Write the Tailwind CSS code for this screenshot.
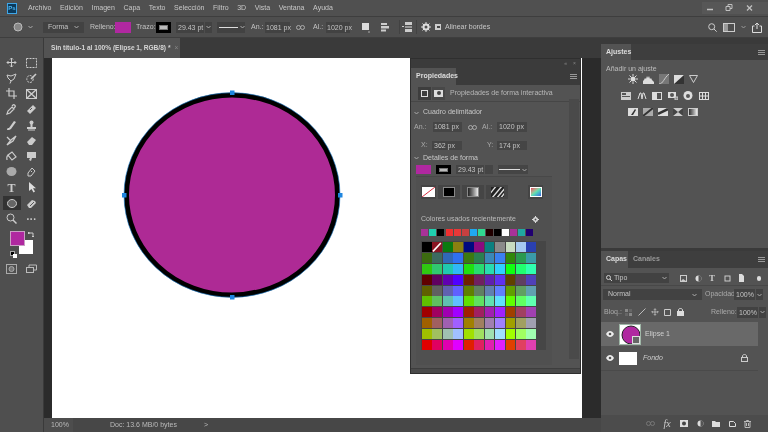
<!DOCTYPE html>
<html><head><meta charset="utf-8"><script src="https://cdn.jsdelivr.net/npm/@tailwindcss/browser@4"></script><title>Photoshop</title></head>
<body class="m-0 bg-[#3a3a3a]">
<div class="w-[768px] h-[432px] overflow-hidden flex flex-col font-['Liberation_Sans',sans-serif] text-[7px] text-[#c4c4c4] bg-[#4f4f4f] blur-[0.4px]">

<!-- menu -->
<div class="h-[16px] shrink-0 flex items-center bg-[#505050] relative">
  <div class="ml-[7px] w-[10px] h-[11px] bg-[#0b3a5c] border border-[#3fa6e8] text-[#4db5f0] text-[6px] leading-[9px] text-center font-bold">Ps</div>
  <div class="ml-[11px] flex gap-[8.6px] text-[7px] text-[#c8c8c8]"><span>Archivo</span><span>Edición</span><span>Imagen</span><span>Capa</span><span>Texto</span><span>Selección</span><span>Filtro</span><span>3D</span><span>Vista</span><span>Ventana</span><span>Ayuda</span></div>
  <div class="ml-auto flex items-center h-[12px] bg-[#575757] text-[#bdbdbd]">
    <svg class="w-[66px] h-[12px]" viewBox="0 0 66 12" fill="none" stroke="#c0c0c0"><path d="M5 7.5h6" stroke-width="1.5"/><path d="M24 4.5h4v4h-4zM26 4.5v-2h4v4h-2" /><path d="M45 3.5l5 5M50 3.5l-5 5" stroke-width="1.3"/></svg>
  </div>
</div>

<!-- options -->
<div class="h-[22px] shrink-0 flex items-center bg-[#4e4e4e] border-t border-b border-[#3e3e3e] relative">
  <svg class="ml-[13px] w-[10px] h-[10px]" viewBox="0 0 10 10"><circle cx="5" cy="5" r="4" fill="#888" stroke="#bbb"/></svg>
  <svg class="ml-[5px] w-[5px] h-[4px]" viewBox="0 0 5 4" fill="none" stroke="#aaa"><path d="M0.5 1l2 2 2-2"/></svg>
  <div class="ml-[10px] w-[41px] h-[11px] bg-[#424242] flex items-center justify-between px-[5px]"><span>Forma</span><svg class="w-[5px] h-[4px]" viewBox="0 0 5 4" fill="none" stroke="#aaa"><path d="M0.5 1l2 2 2-2"/></svg></div>
  <span class="ml-[6px] w-[25px]">Relleno:</span>
  <div class="w-[16px] h-[11px] bg-[#b028a0]"></div>
  <span class="ml-[5px] w-[20px]">Trazo:</span>
  <div class="w-[15px] h-[11px] bg-black flex items-center justify-center"><div class="w-[9px] h-[5px] bg-[#bbb] border border-[#777]"></div></div>
  <div class="ml-[5px] w-[28px] h-[11px] bg-[#424242] pl-[2px] leading-[11px] whitespace-nowrap">29.43 pt</div>
  <div class="ml-px w-[7px] h-[11px] bg-[#424242] flex items-center justify-center"><svg class="w-[5px] h-[4px]" viewBox="0 0 5 4" fill="none" stroke="#aaa"><path d="M0.5 1l2 2 2-2"/></svg></div>
  <div class="ml-[5px] w-[28px] h-[11px] bg-[#424242] flex items-center gap-[2px] pl-[2px]"><div class="w-[19px] h-px bg-[#ddd]"></div><svg class="w-[5px] h-[4px]" viewBox="0 0 5 4" fill="none" stroke="#aaa"><path d="M0.5 1l2 2 2-2"/></svg></div>
  <span class="ml-[6px] w-[14px]">An.:</span>
  <div class="w-[25px] h-[11px] bg-[#424242] pl-px leading-[11px] whitespace-nowrap">1081 px</div>
  <svg class="ml-[6px] w-[9px] h-[5px]" viewBox="0 0 9 5" fill="none" stroke="#aaa"><rect x=".5" y=".5" width="4" height="4" rx="2"/><rect x="4.5" y=".5" width="4" height="4" rx="2"/></svg>
  <span class="ml-[8px] w-[13px]">Al.:</span>
  <div class="w-[24px] h-[11px] bg-[#424242] pl-px leading-[11px] whitespace-nowrap">1020 px</div>
  <svg class="ml-[11px] w-[10px] h-[11px]" viewBox="0 0 10 11"><rect x="1" y="1" width="7" height="7" fill="#ddd"/><path d="M7 10h2" stroke="#aaa"/></svg>
  <svg class="ml-[9px] w-[10px] h-[11px]" viewBox="0 0 10 11" fill="#ccc"><rect x="1" y="1" width="6" height="2"/><rect x="1" y="4" width="8" height="2.5"/><rect x="1" y="7.5" width="5" height="2"/></svg>
  <div class="ml-[9px] w-px h-[14px] bg-[#424242]"></div>
  <svg class="ml-[2px] w-[11px] h-[12px]" viewBox="0 0 11 12" fill="#ccc"><rect x="3" y="1" width="7" height="3"/><rect x="3" y="5" width="7" height="2" fill="#999"/><rect x="3" y="8" width="7" height="3"/><path d="M0 5h2v1H0z"/></svg>
  <div class="ml-[3px] w-px h-[14px] bg-[#424242]"></div>
  <svg class="ml-[4px] w-[10px] h-[10px]" viewBox="0 0 10 10"><circle cx="5" cy="5" r="2.5" fill="none" stroke="#ddd" stroke-width="2"/><path d="M5 0v2M5 8v2M0 5h2M8 5h2M1.5 1.5l1.5 1.5M7 7l1.5 1.5M1.5 8.5L3 7M7 3l1.5-1.5" stroke="#ddd"/></svg>
  <div class="ml-[4px] w-[6px] h-[6px] bg-[#ccc] flex items-center justify-center"><div class="w-[3px] h-[2px] bg-[#444]"></div></div>
  <span class="ml-[4px] text-[#c8c8c8]">Alinear bordes</span>
  <div class="ml-auto mr-[6px] flex items-center gap-[6px]">
    <svg class="w-[9px] h-[9px]" viewBox="0 0 9 9" fill="none" stroke="#ccc"><circle cx="3.7" cy="3.7" r="3"/><path d="M6 6l2.7 2.7"/></svg>
    <svg class="w-[12px] h-[9px]" viewBox="0 0 12 9"><rect x=".5" y=".5" width="11" height="8" fill="none" stroke="#ccc"/><rect x="1" y="1" width="4" height="7" fill="#999"/></svg>
    <svg class="w-[5px] h-[4px]" viewBox="0 0 5 4" fill="none" stroke="#999"><path d="M0.5 1l2 2 2-2"/></svg>
    <svg class="w-[10px] h-[11px]" viewBox="0 0 10 11" fill="none" stroke="#ddd"><path d="M2.5 4H.5v6.5h9V4h-2M5 7V1M3 3l2-2 2 2"/></svg>
  </div>
</div>

<!-- main -->
<div class="flex-1 flex min-h-0">
  <!-- tools -->
  <div class="w-[44px] shrink-0 bg-[#4f4f4f] border-r border-[#3a3a3a] pt-[17px] flex flex-col items-center">
    <div class="grid grid-cols-[20px_20px] auto-rows-[15.6px] place-items-center">
      <svg class="w-[11px] h-[11px]" viewBox="0 0 11 11" fill="none" stroke="#ccc"><path d="M5.5 1v9M1 5.5h9M4 2.5L5.5 1 7 2.5M4 8.5L5.5 10 7 8.5M2.5 4L1 5.5 2.5 7M8.5 4L10 5.5 8.5 7"/></svg>
      <svg class="w-[11px] h-[10px]" viewBox="0 0 11 10" fill="none" stroke="#ccc" stroke-dasharray="2 1"><rect x=".5" y=".5" width="10" height="9"/></svg>
      <svg class="w-[11px] h-[11px]" viewBox="0 0 11 11" fill="none" stroke="#ccc"><path d="M1 2l4 1 5-2-2 5-3 2-3-3zM5 8l-1 2.5"/></svg>
      <svg class="w-[11px] h-[11px]" viewBox="0 0 11 11" fill="none" stroke="#ccc"><ellipse cx="4" cy="6" rx="3.2" ry="3.5" stroke-dasharray="2 1"/><path d="M5 6l5-5" stroke-width="1.6"/></svg>
      <svg class="w-[11px] h-[11px]" viewBox="0 0 11 11" fill="none" stroke="#ccc" stroke-width="1.2"><path d="M3 0v8h8M0 3h8v8"/></svg>
      <svg class="w-[11px] h-[10px]" viewBox="0 0 11 10" fill="none" stroke="#ccc"><rect x=".5" y=".5" width="10" height="9"/><path d="M.5.5l10 9M10.5.5l-10 9" stroke-width="1.4"/></svg>
      <svg class="w-[11px] h-[11px]" viewBox="0 0 11 11" fill="none" stroke="#ccc"><path d="M1 10l1-3 4-4 2 2-4 4zM6 2l1-1c1-1 3 1 2 2l-1 1" stroke-width="1.2"/></svg>
      <svg class="w-[11px] h-[11px]" viewBox="0 0 11 11" fill="#ccc"><path d="M1 7l6-6 3 3-6 6z"/><path d="M4 6l2-2" stroke="#555"/></svg>
      <svg class="w-[11px] h-[11px]" viewBox="0 0 11 11" fill="#ccc"><path d="M1 10c0-2 1-2 2-2l5-7 2 1-5 7c-1 1-3 1-4 1z"/></svg>
      <svg class="w-[11px] h-[11px]" viewBox="0 0 11 11" fill="#ccc"><circle cx="5.5" cy="2.5" r="2"/><path d="M4.5 4h2v3h-2z"/><rect x="1" y="7" width="9" height="2"/><rect x="2" y="9.5" width="7" height="1"/></svg>
      <svg class="w-[11px] h-[11px]" viewBox="0 0 11 11" fill="none" stroke="#ccc"><path d="M1 10l4-5 5-4-3 5zM1 2l3 3" stroke-width="1.3"/></svg>
      <svg class="w-[11px] h-[11px]" viewBox="0 0 11 11" fill="#ccc"><path d="M1 7l5-5 4 3-4 5H3z"/></svg>
      <svg class="w-[11px] h-[11px]" viewBox="0 0 11 11" fill="none" stroke="#ccc"><path d="M2 4l4-3 4 5-4 3zM2 4c-2 2-1 3-1 5" stroke-width="1.2"/></svg>
      <svg class="w-[11px] h-[11px]" viewBox="0 0 11 11" fill="#ccc"><path d="M1 1h9v6H6l-1 3-2-1 1-2H1z"/></svg>
      <svg class="w-[11px] h-[11px]" viewBox="0 0 11 11" fill="#aaa"><ellipse cx="5.5" cy="5.5" rx="5" ry="4.5"/></svg>
      <svg class="w-[11px] h-[11px]" viewBox="0 0 11 11" fill="none" stroke="#ccc"><path d="M2 7l4-5 3 3-4 5H2zM6 6l-1-1"/></svg>
      <span class="text-[12px] leading-none font-['Liberation_Serif'] font-bold text-[#ccc]">T</span>
      <svg class="w-[10px] h-[11px]" viewBox="0 0 10 11" fill="#ddd"><path d="M2 0v9l2.5-2 2 3.5 1.5-1-2-3.3H9z"/></svg>
      <div class="w-[18px] h-[14px] bg-[#333] flex items-center justify-center"><svg class="w-[10px] h-[9px]" viewBox="0 0 10 9"><ellipse cx="5" cy="4.5" rx="4.5" ry="4" fill="#666" stroke="#ccc"/></svg></div>
      <svg class="w-[11px] h-[11px]" viewBox="0 0 11 11" fill="#ccc"><path d="M1 7l5-5 3 1 1 2-5 5H3z"/><path d="M4 8l4-4" stroke="#555"/></svg>
      <svg class="w-[11px] h-[11px]" viewBox="0 0 11 11" fill="none" stroke="#ccc"><circle cx="4.5" cy="4.5" r="3.5"/><path d="M7 7l3.5 3.5" stroke-width="1.5"/></svg>
      <span class="text-[#ccc] text-[10px] leading-none font-bold tracking-[0.5px] -mt-[4px]">...</span>
    </div>
    <div class="relative w-[24px] h-[24px] mt-[4px] ml-[1px]">
      <div class="absolute left-[9px] top-[9px] w-[14px] h-[14px] bg-white"></div>
      <div class="absolute left-0 top-0 w-[15px] h-[15px] bg-[#b028a0] border border-[#c9a0c4]"></div>
      <svg class="absolute left-[18px] top-0 w-[7px] h-[7px]" viewBox="0 0 7 7" fill="none" stroke="#ccc"><path d="M1 2h4v4M0 2l1-1v2zM4 5l1 1 1-1"/></svg>
    </div>
    <div class="self-start ml-[10px] -mt-[4px] relative w-[7px] h-[7px]"><div class="absolute left-0 top-0 w-[5px] h-[5px] bg-black border border-[#aaa]"></div><div class="absolute left-[3px] top-[3px] w-[4px] h-[4px] bg-white"></div></div>
    <div class="mt-[6px] flex gap-[9px]">
      <svg class="w-[11px] h-[10px]" viewBox="0 0 11 10" fill="none" stroke="#aaa"><rect x=".5" y=".5" width="10" height="9"/><circle cx="5.5" cy="5" r="2.5" fill="#777"/></svg>
      <svg class="w-[11px] h-[10px]" viewBox="0 0 11 10" fill="none" stroke="#bbb"><rect x=".5" y="3.5" width="7" height="5"/><path d="M3 3V1h7.5v5H8"/></svg>
    </div>
  </div>

  <!-- centre -->
  <div class="w-[557px] shrink-0 flex flex-col relative bg-[#2b2b2b]">
    <div class="h-[20px] shrink-0 bg-[#3a3a3a] flex">
      <div class="w-[136px] bg-[#535353] flex items-center pl-[7px] gap-[4px] font-bold text-[6.6px] text-[#d6d6d6]"><span class="whitespace-nowrap">Sin título-1 al 100% (Elipse 1, RGB/8) *</span><span class="text-[#888] font-normal">×</span></div>
    </div>
    <div class="flex-1 min-h-0 pl-[8px] relative">
      <div class="w-[530px] h-[360px] bg-white relative">
        <svg class="absolute left-0 top-0 w-[530px] h-[360px]" viewBox="0 0 530 360">
          <ellipse cx="180" cy="137" rx="105.5" ry="100" fill="#ae2a95" stroke="#000" stroke-width="5"/>
          <ellipse cx="180" cy="137" rx="108" ry="102.3" fill="none" stroke="#1d7fd0" stroke-width=".6"/>
          <g fill="#1f86e0"><rect x="178" y="32.5" width="4.5" height="4.5"/><rect x="178" y="237" width="4.5" height="4.5"/><rect x="70" y="135" width="4.5" height="4.5"/><rect x="286" y="135" width="4.5" height="4.5"/></g>
        </svg>
      </div>
      <div class="absolute left-0 right-0 bottom-0 h-[14px] bg-[#474747] flex items-center text-[#bbb]">
        <div class="w-[29px] h-full bg-[#4d4d4d] pl-[7px] leading-[14px]">100%</div>
        <span class="ml-[37px]">Doc: 13.6 MB/0 bytes</span>
        <span class="ml-[27px]">&gt;</span>
      </div>
    </div>

    <!-- properties floating panel -->
    <div class="absolute left-[366px] top-[20px] w-[171px] h-[316px] bg-[#535353] border border-[#2f2f2f] flex flex-col">
      <div class="h-[9px] shrink-0 bg-[#3b3b3b] flex justify-end items-center gap-[6px] pr-[4px] text-[#888] text-[5px]"><span>«</span><span>×</span></div>
      <div class="h-[17px] shrink-0 bg-[#3b3b3b] flex justify-between items-center">
        <div class="w-[45px] h-full bg-[#535353] flex items-center pl-[5px] font-bold text-[#ddd]">Propiedades</div>
        <svg class="mr-[3px] w-[7px] h-[5px]" viewBox="0 0 7 5" fill="#999"><rect width="7" height="1"/><rect y="2" width="7" height="1"/><rect y="4" width="7" height="1"/></svg>
      </div>
      <div class="h-[17px] shrink-0 flex items-center pl-[7px] border-b border-[#464646] mb-[5px]">
        <div class="w-[13px] h-[13px] bg-[#3d3d3d] flex items-center justify-center"><div class="w-[7px] h-[7px] border border-[#ddd]"></div></div>
        <div class="ml-px w-[13px] h-[13px] bg-[#484848] flex items-center justify-center"><div class="w-[9px] h-[7px] bg-[#ddd] flex items-center justify-center"><div class="w-[4px] h-[4px] rounded-full bg-[#444]"></div></div></div>
        <span class="ml-[5px] text-[#b8b8b8]">Propiedades de forma interactiva</span>
      </div>
      <div class="flex items-center pl-[3px] h-[11px] text-[#c8c8c8]"><svg class="w-[5px] h-[4px]" viewBox="0 0 5 4" fill="none" stroke="#aaa"><path d="M0.5 1l2 2 2-2"/></svg><span class="ml-[4px]">Cuadro delimitador</span></div>
      <div class="flex items-center mt-[4px] h-[10px]">
        <span class="ml-[3px] w-[19px] text-[#aaa]">An.:</span><div class="w-[29px] h-[10px] bg-[#454545] pl-[1px] leading-[10px]">1081 px</div>
        <svg class="ml-[6px] w-[9px] h-[5px]" viewBox="0 0 9 5" fill="none" stroke="#aaa"><rect x=".5" y=".5" width="4" height="4" rx="2"/><rect x="4.5" y=".5" width="4" height="4" rx="2"/></svg>
        <span class="ml-[5px] w-[15px] text-[#aaa]">Al.:</span><div class="w-[30px] h-[10px] bg-[#454545] pl-[2px] leading-[10px]">1020 px</div>
      </div>
      <div class="flex items-center mt-[9px] h-[9px]">
        <span class="ml-[10px] w-[11px] text-[#aaa]">X:</span><div class="w-[30px] h-[9px] bg-[#454545] pl-[2px] leading-[9px]">362 px</div>
        <span class="ml-[25px] w-[10px] text-[#aaa]">Y:</span><div class="w-[30px] h-[9px] bg-[#454545] pl-[2px] leading-[9px]">174 px</div>
      </div>
      <div class="flex items-center pl-[3px] h-[10px] mt-[3px] text-[#c8c8c8]"><svg class="w-[5px] h-[4px]" viewBox="0 0 5 4" fill="none" stroke="#aaa"><path d="M0.5 1l2 2 2-2"/></svg><span class="ml-[4px]">Detalles de forma</span></div>
      <div class="flex items-center mt-[2px] h-[9px] pl-[5px]">
        <div class="w-[15px] h-[9px] bg-[#b028a0]"></div>
        <div class="ml-[5px] w-[15px] h-[9px] bg-black flex items-center justify-center"><div class="w-[9px] h-[4px] bg-[#bbb] border border-[#777]"></div></div>
        <div class="ml-[5px] w-[28px] h-[9px] bg-[#454545] pl-[2px] leading-[9px] whitespace-nowrap">29.43 pt</div>
        <div class="ml-px w-[8px] h-[9px] bg-[#454545]"></div>
        <div class="ml-[5px] w-[30px] h-[9px] bg-[#454545] flex items-center pl-[1px] gap-[2px]"><div class="w-[21px] h-px bg-[#ddd]"></div><svg class="w-[5px] h-[4px]" viewBox="0 0 5 4" fill="none" stroke="#aaa"><path d="M0.5 1l2 2 2-2"/></svg></div>
      </div>
      <div class="ml-[5px] w-[136px] flex-1 mt-[2px] mb-[8px] bg-[#505050] border-t border-[#484848] relative">
        <div class="flex items-center h-[15px] mt-[7px] pl-[5px]">
          <div class="w-[15px] h-[14px] bg-[#454545] flex items-center justify-center"><svg class="w-[13px] h-[10px]" viewBox="0 0 13 10"><rect width="13" height="10" fill="#fff"/><path d="M0 10L13 0" stroke="#d83040"/></svg></div>
          <div class="ml-[2px] w-[22px] h-[14px] bg-[#454545] flex items-center justify-center"><div class="w-[12px] h-[10px] bg-black border border-[#888]"></div></div>
          <div class="ml-[2px] w-[22px] h-[14px] bg-[#454545] flex items-center justify-center"><div class="w-[12px] h-[10px] border border-[#888] bg-gradient-to-r from-[#222] to-[#eee]"></div></div>
          <div class="ml-[2px] w-[22px] h-[14px] bg-[#454545] flex items-center justify-center"><svg class="w-[13px] h-[10px]" viewBox="0 0 13 10"><rect width="13" height="10" fill="#222"/><path d="M-2 8L6-2M1 11L11-1M5 12L15 0M9 12L16 3" stroke="#ddd" stroke-width="1.4"/></svg></div>
          <div class="ml-[20px] w-[15px] h-[14px] bg-[#454545] flex items-center justify-center"><div class="w-[12px] h-[10px] border border-white bg-gradient-to-br from-[#e04060] via-[#60e0b0] to-[#4060e0]"></div></div>
        </div>
        <div class="flex items-center mt-[15px] pl-[5px] h-[11px] text-[#bdbdbd]"><span class="w-[111px] shrink-0">Colores usados recientemente</span><svg class="w-[7px] h-[7px]" viewBox="0 0 10 10"><circle cx="5" cy="5" r="2.5" fill="none" stroke="#ddd" stroke-width="2.2"/><path d="M5 0v2M5 8v2M0 5h2M8 5h2" stroke="#ddd" stroke-width="1.4"/></svg></div>
        <div class="flex ml-[5px] mt-[4px] gap-[1px]">
          <div class="w-[7px] h-[7px] bg-[#a83298]"></div><div class="w-[7px] h-[7px] bg-[#20d0b0]"></div><div class="w-[7px] h-[7px] bg-[#000000]"></div><div class="w-[7px] h-[7px] bg-[#f03030] ml-[1px]"></div><div class="w-[7px] h-[7px] bg-[#e83838]"></div><div class="w-[7px] h-[7px] bg-[#c84040]"></div><div class="w-[7px] h-[7px] bg-[#20a8f0]"></div><div class="w-[7px] h-[7px] bg-[#30d890]"></div><div class="w-[7px] h-[7px] bg-[#200000]"></div><div class="w-[7px] h-[7px] bg-[#000000]"></div><div class="w-[7px] h-[7px] bg-[#ffffff]"></div><div class="w-[7px] h-[7px] bg-[#a83298]"></div><div class="w-[7px] h-[7px] bg-[#20a8a0]"></div><div class="w-[7px] h-[7px] bg-[#200070]"></div>
        </div>
        <div class="ml-[5px] mt-[5px] w-[125px] h-[109px] overflow-hidden bg-[#464646] pl-px pt-px grid grid-cols-[repeat(11,9.8px)] auto-rows-[10px] gap-[0.65px] gap-y-[0.9px]">
          <div class="bg-[#000000]"></div><div class="bg-[#8a1522] relative overflow-hidden"><svg class="absolute inset-0 w-full h-full" viewBox="0 0 10 10"><path d="M1 9.5L9 1" stroke="#fff" stroke-width="1.6"/></svg></div><div class="bg-[#0a7a10]"></div><div class="bg-[#8a8010]"></div><div class="bg-[#000a80]"></div><div class="bg-[#8a0a80]"></div><div class="bg-[#0a8080]"></div><div class="bg-[#8a8a8a]"></div><div class="bg-[#c8dcc0]"></div><div class="bg-[#a6caf0]"></div><div class="bg-[#2a40b0]"></div>
          <div class="bg-[#3c6a10]"></div><div class="bg-[#3c6a60]"></div><div class="bg-[#3068b8]"></div><div class="bg-[#3070f0]"></div><div class="bg-[#3c7a10]"></div><div class="bg-[#2a8050]"></div><div class="bg-[#3a88b8]"></div><div class="bg-[#3a80f0]"></div><div class="bg-[#30880a]"></div><div class="bg-[#2a9a50]"></div><div class="bg-[#3a9aa8]"></div>
          <div class="bg-[#30c810]"></div><div class="bg-[#30c870]"></div><div class="bg-[#20c8b0]"></div><div class="bg-[#30b8f8]"></div><div class="bg-[#20e010]"></div><div class="bg-[#28dc70]"></div><div class="bg-[#28dcb0]"></div><div class="bg-[#30d0ff]"></div><div class="bg-[#10ff10]"></div><div class="bg-[#20ff70]"></div><div class="bg-[#30ffb0]"></div>
          <div class="bg-[#600000]"></div><div class="bg-[#600060]"></div><div class="bg-[#6000b0]"></div><div class="bg-[#5000ff]"></div><div class="bg-[#702000]"></div><div class="bg-[#702060]"></div><div class="bg-[#6020b0]"></div><div class="bg-[#6030f0]"></div><div class="bg-[#604000]"></div><div class="bg-[#604060]"></div><div class="bg-[#5040b8]"></div>
          <div class="bg-[#606000]"></div><div class="bg-[#606060]"></div><div class="bg-[#6060b0]"></div><div class="bg-[#6060ff]"></div><div class="bg-[#608000]"></div><div class="bg-[#608060]"></div><div class="bg-[#6080b0]"></div><div class="bg-[#6080ff]"></div><div class="bg-[#60a000]"></div><div class="bg-[#60a060]"></div><div class="bg-[#60a0b0]"></div>
          <div class="bg-[#60c000]"></div><div class="bg-[#60c060]"></div><div class="bg-[#60c0b0]"></div><div class="bg-[#60c0ff]"></div><div class="bg-[#60e000]"></div><div class="bg-[#60e060]"></div><div class="bg-[#60e0b0]"></div><div class="bg-[#60e0ff]"></div><div class="bg-[#60ff00]"></div><div class="bg-[#60ff60]"></div><div class="bg-[#60ffb0]"></div>
          <div class="bg-[#a00000]"></div><div class="bg-[#a00060]"></div><div class="bg-[#a000b0]"></div><div class="bg-[#a000ff]"></div><div class="bg-[#a02000]"></div><div class="bg-[#a02060]"></div><div class="bg-[#a020b0]"></div><div class="bg-[#a020ff]"></div><div class="bg-[#a04000]"></div><div class="bg-[#a04060]"></div><div class="bg-[#a040b0]"></div>
          <div class="bg-[#a06000]"></div><div class="bg-[#a06060]"></div><div class="bg-[#a060b0]"></div><div class="bg-[#a060ff]"></div><div class="bg-[#a08000]"></div><div class="bg-[#a08060]"></div><div class="bg-[#a080b0]"></div><div class="bg-[#a080ff]"></div><div class="bg-[#a0a000]"></div><div class="bg-[#a0a060]"></div><div class="bg-[#a0a0b0]"></div>
          <div class="bg-[#a0c000]"></div><div class="bg-[#a0c060]"></div><div class="bg-[#a0c0b0]"></div><div class="bg-[#a0c0ff]"></div><div class="bg-[#a0e000]"></div><div class="bg-[#a0e060]"></div><div class="bg-[#a0e0b0]"></div><div class="bg-[#a0e0ff]"></div><div class="bg-[#a0ff00]"></div><div class="bg-[#a0ff60]"></div><div class="bg-[#a0ffb0]"></div>
          <div class="bg-[#e00000]"></div><div class="bg-[#e00060]"></div><div class="bg-[#e000b0]"></div><div class="bg-[#e000ff]"></div><div class="bg-[#e02000]"></div><div class="bg-[#e02060]"></div><div class="bg-[#e020b0]"></div><div class="bg-[#e020ff]"></div><div class="bg-[#e04000]"></div><div class="bg-[#e04060]"></div><div class="bg-[#e040b0]"></div>
          <div class="bg-[#e06000]"></div><div class="bg-[#e06060]"></div><div class="bg-[#e060b0]"></div><div class="bg-[#e060ff]"></div><div class="bg-[#e08000]"></div><div class="bg-[#e08060]"></div><div class="bg-[#e080b0]"></div><div class="bg-[#e080ff]"></div><div class="bg-[#e0a000]"></div><div class="bg-[#e0a060]"></div><div class="bg-[#e0a0b0]"></div>
        </div>
      </div>
      <div class="absolute right-px top-[40px] bottom-[14px] w-[10px] bg-[#4a4a4a]"></div>
      <div class="absolute left-0 right-0 bottom-0 h-[5px] bg-[#4a4a4a] border-t border-[#3e3e3e]"></div>
    </div>
  </div>

  <!-- dock -->
  <div class="flex-1 min-w-0 bg-[#3a3a3a] flex flex-col pt-[6px]">
    <div class="h-[204px] shrink-0 bg-[#535353] flex flex-col">
      <div class="h-[16px] shrink-0 bg-[#3e3e3e] flex justify-between items-center">
        <div class="w-[30px] h-full bg-[#535353] flex items-center pl-[5px] font-bold text-[#ddd]">Ajustes</div>
        <svg class="mr-[3px] w-[7px] h-[5px]" viewBox="0 0 7 5" fill="#999"><rect width="7" height="1"/><rect y="2" width="7" height="1"/><rect y="4" width="7" height="1"/></svg>
      </div>
      <div class="pl-[5px] pt-[4px] h-[14px] text-[#bdbdbd]">Añadir un ajuste</div>
      <div class="flex ml-[27px] gap-[5px] h-[10px] items-center">
        <svg class="w-[10px] h-[10px]" viewBox="0 0 10 10"><circle cx="5" cy="5" r="2.5" fill="#ddd"/><path d="M5 0v2M5 8v2M0 5h2M8 5h2M1.5 1.5L3 3M7 7l1.5 1.5M1.5 8.5L3 7M7 3l1.5-1.5" stroke="#ddd"/></svg>
        <svg class="w-[11px] h-[9px]" viewBox="0 0 11 9" fill="#ddd"><path d="M0 9V6l1-1 1-2 1 1 1-3 1 2 1-2 1 3 1-1 1 2 2 2v2z"/></svg>
        <svg class="w-[10px] h-[10px]" viewBox="0 0 10 10"><rect width="10" height="10" fill="#777"/><path d="M0 10c4 0 5-6 10-10" stroke="#ccc" fill="none"/></svg>
        <svg class="w-[10px] h-[9px]" viewBox="0 0 10 9"><rect width="10" height="9" fill="#ddd"/><path d="M0 9L10 0v9z" fill="#333"/></svg>
        <svg class="w-[9px] h-[8px]" viewBox="0 0 9 8" fill="none" stroke="#ccc"><path d="M.5.5h8L4.5 7.5z"/></svg>
      </div>
      <div class="flex ml-[20px] gap-[5.5px] mt-[6.5px] h-[10px] items-center">
        <svg class="w-[10px] h-[8px]" viewBox="0 0 10 8"><rect width="10" height="8" fill="#ccc"/><rect x="1" y="1" width="4" height="2" fill="#555"/><rect x="1" y="4" width="8" height="1" fill="#555"/></svg>
        <svg class="w-[10px] h-[8px]" viewBox="0 0 10 8" fill="none" stroke="#ddd"><path d="M1 7l2-6h1l1 6 1-6h1l2 6"/></svg>
        <div class="w-[10px] h-[8px] border border-[#ddd] flex"><div class="w-1/2 bg-[#ddd]"></div></div>
        <svg class="w-[10px] h-[9px]" viewBox="0 0 10 9"><rect y="1" width="8" height="6" fill="#ddd"/><circle cx="4" cy="4" r="2" fill="#555"/><path d="M7 6h3v3H7z" fill="#888" stroke="#ccc"/></svg>
        <svg class="w-[10px] h-[9px]" viewBox="0 0 10 9" fill="#ddd"><path d="M5 0a4.5 4.5 0 110 9 4.5 4.5 0 010-9z"/><circle cx="5" cy="5" r="2" fill="#555"/></svg>
        <svg class="w-[10px] h-[8px]" viewBox="0 0 10 8" fill="none" stroke="#ddd"><rect x=".5" y=".5" width="9" height="7"/><path d="M3.5 0v8M6.5 0v8M0 4h10"/></svg>
      </div>
      <div class="flex ml-[27px] gap-[5px] mt-[6.5px] h-[10px] items-center">
        <svg class="w-[10px] h-[8px]" viewBox="0 0 10 8"><rect width="10" height="8" fill="#ddd"/><path d="M3 7l4-6 1 1-3 5z" fill="#333"/></svg>
        <svg class="w-[10px] h-[8px]" viewBox="0 0 10 8"><rect width="10" height="8" fill="#aaa"/><path d="M0 8L10 0" stroke="#333" stroke-width="2"/></svg>
        <svg class="w-[10px] h-[8px]" viewBox="0 0 10 8"><rect width="10" height="8" fill="#ddd"/><path d="M0 6L10 1" stroke="#333" stroke-width="2.5"/></svg>
        <svg class="w-[10px] h-[8px]" viewBox="0 0 10 8"><rect width="10" height="8" fill="#ccc"/><path d="M0 0l5 4-5 4zM10 0L5 4l5 4z" fill="#444"/></svg>
        <div class="w-[10px] h-[8px] border border-[#ccc] bg-gradient-to-r from-[#333] to-[#eee]"></div>
      </div>
    </div>
    <div class="h-[3px] shrink-0"></div>
    <div class="flex-1 min-h-0 bg-[#535353] flex flex-col">
      <div class="h-[17px] shrink-0 bg-[#3e3e3e] flex justify-between items-center">
        <div class="flex h-full items-center">
          <div class="w-[27px] h-full bg-[#535353] flex items-center pl-[5px] font-bold text-[#ddd]">Capas</div>
          <span class="ml-[5px] font-bold text-[#999]">Canales</span>
        </div>
        <svg class="mr-[3px] w-[7px] h-[5px]" viewBox="0 0 7 5" fill="#999"><rect width="7" height="1"/><rect y="2" width="7" height="1"/><rect y="4" width="7" height="1"/></svg>
      </div>
      <div class="flex items-center h-[15px] mt-[3px] pl-[3px] border-b border-[#484848]">
        <div class="w-[65px] h-[10px] bg-[#424242] flex items-center pl-[2px] gap-[2px]"><svg class="w-[6px] h-[6px]" viewBox="0 0 6 6" fill="none" stroke="#ccc"><circle cx="2.5" cy="2.5" r="2"/><path d="M4 4l2 2"/></svg><span>Tipo</span><svg class="ml-auto mr-[2px] w-[5px] h-[4px]" viewBox="0 0 5 4" fill="none" stroke="#aaa"><path d="M0.5 1l2 2 2-2"/></svg></div>
        <div class="ml-[11px] flex items-center gap-[7.5px]">
          <svg class="w-[7px] h-[7px]" viewBox="0 0 7 7"><rect x=".5" y=".5" width="6" height="6" fill="#555" stroke="#ccc"/><path d="M1 6l2-2 3 2z" fill="#ccc"/></svg>
          <svg class="w-[7px] h-[7px]" viewBox="0 0 7 7"><circle cx="3.5" cy="3.5" r="3" fill="#ddd"/><path d="M3.5 .5v6a3 3 0 000-6z" fill="#555"/></svg>
          <span class="text-[9px] leading-none font-['Liberation_Serif'] font-bold text-[#ccc] w-[7px]">T</span>
          <svg class="w-[7px] h-[7px]" viewBox="0 0 7 7" fill="none" stroke="#ccc"><rect x="1" y="1" width="5" height="5"/></svg>
          <svg class="w-[7px] h-[8px]" viewBox="0 0 7 8" fill="#ddd"><path d="M1 0h3l2 2v6H1z"/></svg>
        </div>
        <div class="ml-[12px] w-[4px] h-[5px] rounded-full bg-[#ddd]"></div>
      </div>
      <div class="flex items-center h-[13px] mt-[2px] pl-[2px]">
        <div class="w-[99px] h-[11px] bg-[#424242] flex items-center justify-between px-[5px]"><span>Normal</span><svg class="w-[5px] h-[4px]" viewBox="0 0 5 4" fill="none" stroke="#aaa"><path d="M0.5 1l2 2 2-2"/></svg></div>
        <span class="ml-[3px] w-[28px] text-[#aaa]">Opacidad:</span>
        <div class="ml-[1px] w-[21px] h-[11px] bg-[#424242] pl-[2px] leading-[11px]">100%</div>
        <div class="ml-px w-[7px] h-[11px] bg-[#424242] flex items-center justify-center"><svg class="w-[5px] h-[4px]" viewBox="0 0 5 4" fill="none" stroke="#aaa"><path d="M0.5 1l2 2 2-2"/></svg></div>
      </div>
      <div class="flex items-center h-[16px] mt-[3px] pl-[3px]">
        <span class="w-[21px] text-[#aaa]">Bloq.:</span>
        <svg class="w-[7px] h-[7px]" viewBox="0 0 7 7" fill="#888"><path d="M0 0h3v3H0zM4 4h3v3H4z"/><path d="M4 0h3v3H4zM0 4h3v3H0z" fill="#666"/></svg>
        <svg class="ml-[6px] w-[8px] h-[8px]" viewBox="0 0 8 8" stroke="#bbb"><path d="M.5 7.5L7.5.5"/></svg>
        <svg class="ml-[5px] w-[8px] h-[8px]" viewBox="0 0 11 11" fill="none" stroke="#ccc"><path d="M5.5 1v9M1 5.5h9M4 2.5L5.5 1 7 2.5M4 8.5L5.5 10 7 8.5M2.5 4L1 5.5 2.5 7M8.5 4L10 5.5 8.5 7"/></svg>
        <svg class="ml-[5px] w-[7px] h-[7px]" viewBox="0 0 7 7" fill="none" stroke="#ccc"><path d="M.5.5h6v6h-6z"/></svg>
        <svg class="ml-[6px] w-[7px] h-[8px]" viewBox="0 0 7 8"><rect y="3" width="7" height="5" fill="#ddd"/><path d="M1.5 3V2c0-2 4-2 4 0v1" fill="none" stroke="#ddd"/></svg>
        <span class="ml-[27px] w-[25px] text-[#aaa]">Relleno:</span>
        <div class="ml-[1px] w-[21px] h-[11px] bg-[#424242] pl-[2px] leading-[11px]">100%</div>
        <div class="ml-px w-[7px] h-[11px] bg-[#424242] flex items-center justify-center"><svg class="w-[5px] h-[4px]" viewBox="0 0 5 4" fill="none" stroke="#aaa"><path d="M0.5 1l2 2 2-2"/></svg></div>
      </div>
      <div class="h-[24px] w-[157px] shrink-0 bg-[#696969] flex items-center mt-[2px] pl-[5px]">
        <svg class="w-[8px] h-[6px]" viewBox="0 0 8 6"><path d="M0 3c2-4 6-4 8 0-2 4-6 4-8 0z" fill="#eee"/><circle cx="4" cy="3" r="1.3" fill="#555"/></svg>
        <div class="ml-[5px] w-[22px] h-[21px] bg-white border border-[#a0b8a8] relative">
          <svg class="absolute inset-0 w-[20px] h-[19px]" viewBox="0 0 20 19"><circle cx="11" cy="10" r="9" fill="#b028a0" stroke="#222"/></svg>
          <div class="absolute right-0 bottom-0 w-[8px] h-[8px] bg-[#666] border border-[#ddd]"></div>
        </div>
        <span class="ml-[4px] text-[#d0d0d0]">Elipse 1</span>
      </div>
      <div class="h-[25px] w-[157px] shrink-0 flex items-center pl-[5px] border-b border-[#4a4a4a]">
        <svg class="w-[8px] h-[6px]" viewBox="0 0 8 6"><path d="M0 3c2-4 6-4 8 0-2 4-6 4-8 0z" fill="#eee"/><circle cx="4" cy="3" r="1.3" fill="#555"/></svg>
        <div class="ml-[5px] w-[18px] h-[13px] bg-white"></div>
        <span class="ml-[6px] italic text-[#ccc]">Fondo</span>
        <svg class="ml-auto mr-[10px] w-[7px] h-[8px]" viewBox="0 0 7 8" fill="none" stroke="#ccc"><rect x=".5" y="3.5" width="6" height="4"/><path d="M1.5 3V2c0-2 4-2 4 0v1"/></svg>
      </div>
      <div class="flex-1"></div>
      <div class="h-[17px] shrink-0 bg-[#4c4c4c] flex items-center pl-[45px] gap-[8.5px]">
        <svg class="w-[9px] h-[5px]" viewBox="0 0 9 5" fill="none" stroke="#777"><rect x=".5" y=".5" width="4" height="4" rx="2"/><rect x="4.5" y=".5" width="4" height="4" rx="2"/></svg>
        <span class="italic text-[10px] leading-none font-['Liberation_Serif'] text-[#ccc] w-[8px]">fx</span>
        <svg class="w-[8px] h-[7px]" viewBox="0 0 8 7"><rect width="8" height="7" fill="#ddd"/><circle cx="4" cy="3.5" r="2" fill="#444"/></svg>
        <svg class="w-[7px] h-[7px]" viewBox="0 0 7 7"><circle cx="3.5" cy="3.5" r="3" fill="#ddd"/><path d="M3.5 .5v6a3 3 0 000-6z" fill="#555"/></svg>
        <svg class="w-[8px] h-[7px]" viewBox="0 0 8 7" fill="#ddd"><path d="M0 1h3l1 1h4v5H0z"/></svg>
        <svg class="w-[7px] h-[7px]" viewBox="0 0 7 7" fill="none" stroke="#ddd"><path d="M.5 1.5h4l2 2v3h-6z"/></svg>
        <svg class="w-[7px] h-[8px]" viewBox="0 0 7 8" fill="none" stroke="#bbb"><path d="M0 1.5h7M1 1.5V7.5h5V1.5M2.5 1.5V.5h2v1M2.5 3v3M4.5 3v3"/></svg>
      </div>
    </div>
  </div>
</div>
</div>
</body></html>
